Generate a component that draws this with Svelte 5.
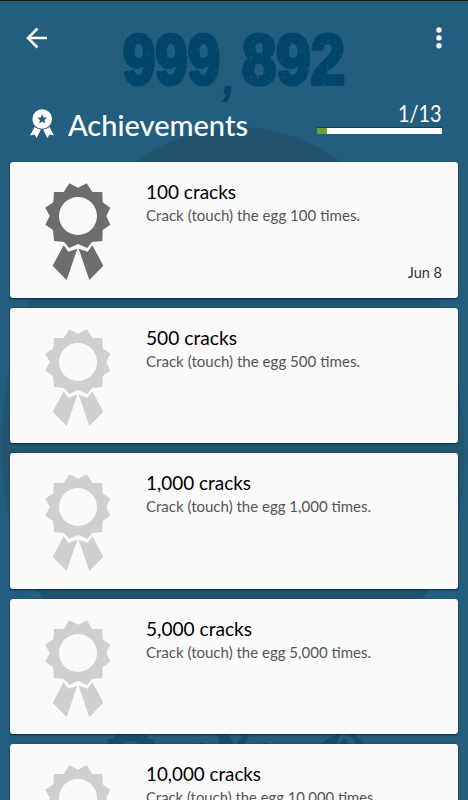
<script>
  const achievements = [
    { count: "100", date: "Jun 8" },
    { count: "500" },
    { count: "1,000" },
    { count: "5,000" },
    { count: "10,000" }
  ];

  // rendered widths of the title and of the description
  const widths = {
    "100": [90, 214],
    "500": [91, 214],
    "1,000": [105, 225],
    "5,000": [106, 225],
    "10,000": [115, 231]
  };

  const total = 13;
  const unlocked = achievements.filter(a => a.date).length;
</script>

<div class="screen">
  <svg class="backdrop" viewBox="0 0 468 800" aria-hidden="true">
    <defs>
      <linearGradient id="egg" x1="0" y1="0" x2="0" y2="1">
        <stop offset="0" stop-color="#23546f" />
        <stop offset="0.75" stop-color="#24566e" />
        <stop offset="1" stop-color="#1f5069" />
      </linearGradient>
      <filter id="worn" x="0" y="0" width="1" height="1">
        <feTurbulence type="fractalNoise" baseFrequency="0.3" numOctaves="3" seed="4" />
        <feColorMatrix values="0 0 0 0 0  0 0 0 0 0  0 0 0 0 0  0 0 0 -7 5.8" />
        <feComposite in="SourceGraphic" operator="in" />
      </filter>
    </defs>
    <path fill="url(#egg)" d="M238 127C325 127 401 195 439 300C474 420 477 525 423 598C370 650 105 650 42 598C-7 525 -11 410 27 305C63 205 151 127 238 127Z" />
    <g class="counter" filter="url(#worn)">
      <text x="123" y="83.500" textLength="97" lengthAdjust="spacingAndGlyphs">999</text>
      <text class="comma" x="223" y="94" textLength="12" lengthAdjust="spacingAndGlyphs">,</text>
      <text x="242" y="83.500" textLength="103" lengthAdjust="spacingAndGlyphs">892</text>
    </g>
    <g fill="#154f70">
      <path fill-rule="evenodd" d="M105 748L109 739L114 739L116 734H146L149 739L153 739L157 748H142A13 13 0 0 0 119 748Z" />
      <path d="M198 744h7l-2-2zM218 734h10l6 10h-15zM236 744l7-10h7l-5 10zM263 742l6 2h-6z" />
      <path d="M320 744l16-10h5l-5 10zM340 744l4-6 5 6zM348 734h7l9 10h-7z" />
    </g>
  </svg>

  <div class="toolbar">
    <svg class="back" viewBox="0 0 22 22" aria-label="Back">
      <path d="M11.5 1.5L2 11L11.5 20.5M2 11H21" />
    </svg>
    <svg class="more" viewBox="0 0 6 22" aria-label="More">
      <circle cx="3" cy="3" r="2.7" />
      <circle cx="3" cy="10.9" r="2.7" />
      <circle cx="3" cy="18.7" r="2.7" />
    </svg>
  </div>

  <header>
    <svg class="medal" viewBox="0 0 24 29">
      <path d="M4.5 18L0 26.5L4.5 25.6L6.5 29L11 20.5L8 20ZM19.500 18L24 26.500L19.500 25.600L17.500 29L13 20.500L16 20Z" />
      <circle cx="12.200" cy="10" r="9.800" />
      <path class="star" d="M12.200 5L13.600 8.500L17.200 8.700L14.400 11L15.300 14.600L12.200 12.600L9.100 14.600L10 11L7.200 8.700L10.800 8.500Z" />
    </svg>
    <svg class="heading" viewBox="0 0 182 36">
      <text x="0" y="28" textLength="180" lengthAdjust="spacingAndGlyphs">Achievements</text>
    </svg>
    <div class="progress">
      <svg class="ratio" viewBox="0 0 125 30">
        <text x="81" y="25" textLength="43.500" lengthAdjust="spacingAndGlyphs">{unlocked}/{total}</text>
      </svg>
      <div class="track">
        <div class="fill" style="width: {(unlocked / total) * 103}%"></div>
      </div>
    </div>
  </header>

  <main>
    {#each achievements as item}
      <article>
        <svg class="badge" class:unlocked={item.date} viewBox="0 0 270 330">
          <path
            fill-rule="evenodd"
            d="M103 25L129 38L155 25L172 51L202 51L203 82L226 98L214 123L226 149L203 165L202 198L171 201L157 219L129 207L103 219L87 201L57 198L54 165L31 149L44 123L31 98L55 82L57 51L86 51ZM129 66A57 57 0 1 0 129 180A57 57 0 1 0 129 66Z"
          />
          <path d="M86 211L100 230L127 221L95 315L53 272ZM172 211L158 230L131 221L163 315L205 272Z" />
        </svg>
        <svg class="copy" viewBox="0 0 296 60">
          <text class="title" x="0" y="25" textLength={widths[item.count][0]} lengthAdjust="spacingAndGlyphs">{item.count} cracks</text>
          <text class="desc" x="0" y="47" textLength={widths[item.count][1]} lengthAdjust="spacingAndGlyphs">Crack (touch) the egg {item.count} times.</text>
        </svg>
        {#if item.date}
          <time>{item.date}</time>
        {/if}
      </article>
    {/each}
  </main>
</div>

<style>
  :global(body) {
    margin: 0;
    overflow: hidden;
  }

  .screen {
    position: relative;
    box-sizing: border-box;
    height: 800px;
    overflow: hidden;
    border-top: 1px solid #21180f;
    background: #245e7f;
    font-family: Lato, "Open Sans", sans-serif;
  }

  .backdrop {
    position: absolute;
    top: -1px;
    left: 0;
    width: 468px;
    height: 800px;
  }

  .counter {
    fill: #05446a;
    stroke: #05446a;
    stroke-width: 4;
    stroke-linejoin: round;
    font: bold 70px "Liberation Sans", sans-serif;
  }

  .comma {
    font-size: 48px;
    font-style: italic;
    stroke-width: 1;
  }

  .toolbar {
    position: relative;
    display: flex;
    justify-content: space-between;
    padding: 26px 26px 0;
    height: 70px;
  }

  .toolbar,
  header {
    box-sizing: content-box;
  }

  .back {
    width: 22px;
    height: 22px;
    fill: none;
    stroke: #fff;
    stroke-width: 2.6;
  }

  .more {
    width: 6px;
    height: 22px;
    fill: #fff;
  }

  header {
    position: relative;
    display: flex;
    height: 65px;
    padding: 0 26px 0 30px;
  }

  .medal {
    width: 24px;
    height: 29px;
    margin-top: 12px;
    fill: #fff;
  }

  .star {
    fill: #245e7f;
  }

  .heading {
    width: 182px;
    height: 36px;
    margin: 11px auto 0 14px;
    fill: #fff;
    font-size: 29px;
    font-weight: 500;
  }

  .progress {
    width: 125px;
  }

  .ratio {
    display: block;
    width: 125px;
    height: 30.5px;
    overflow: visible;
    fill: #fff;
    font-size: 24px;
  }

  .track {
    height: 6px;
    background: #fff;
    box-shadow: 0 -1px 0 #0b4265;
  }

  .fill {
    height: 6px;
    background: #699f36;
  }

  main {
    position: relative;
    display: grid;
    gap: 10px;
    padding: 0 10px;
  }

  article {
    display: grid;
    grid-template-columns: 136px 1fr;
    grid-template-rows: 97px 1fr;
    box-sizing: border-box;
    height: 135.5px;
    border-radius: 3px;
    background: #fafafa;
    box-shadow: 0 1px 2px #002c50, 0 0 1px #003b64;
  }

  .badge {
    grid-row: 1 / 3;
    width: 90px;
    height: 110px;
    margin: 13px 0 0 25px;
    fill: #cfcfcf;
  }

  .badge.unlocked {
    fill: #6d6d6d;
  }

  .copy {
    width: 296px;
    height: 60px;
    margin-top: 12px;
  }

  .title {
    fill: #000;
    font-size: 19px;
  }

  .desc {
    fill: #555;
    font-size: 15px;
  }

  time {
    grid-column: 2;
    justify-self: end;
    margin-right: 16px;
    color: #333;
    font-size: 14.5px;
    line-height: 27px;
  }
</style>
